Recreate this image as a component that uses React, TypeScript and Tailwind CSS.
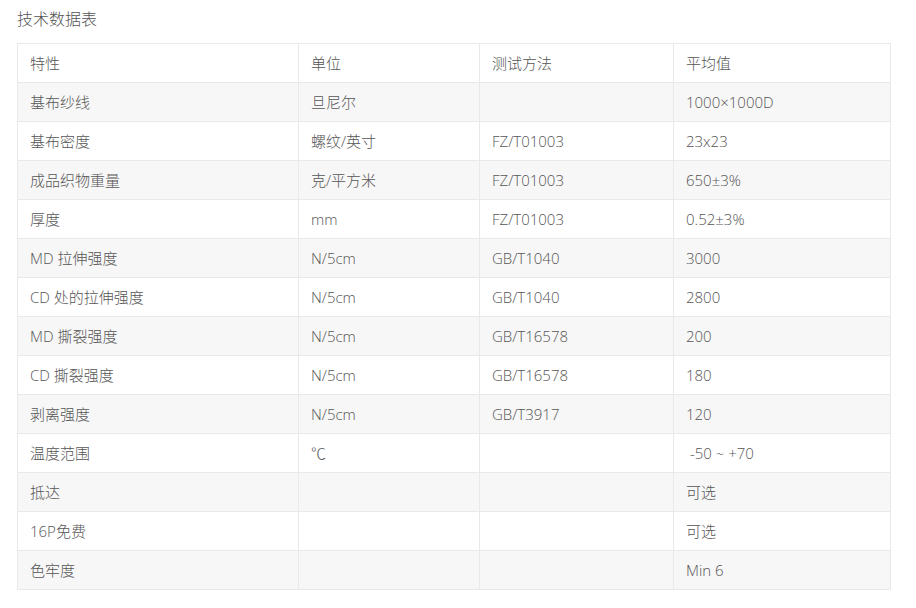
import React from 'react';

const rows: [string, string, string, string][] = [
  ['基布纱线', '旦尼尔', '', '1000×1000D'],
  ['基布密度', '螺纹/英寸', 'FZ/T01003', '23x23'],
  ['成品织物重量', '克/平方米', 'FZ/T01003', '650±3%'],
  ['厚度', 'mm', 'FZ/T01003', '0.52±3%'],
  ['MD 拉伸强度', 'N/5cm', 'GB/T1040', '3000'],
  ['CD 处的拉伸强度', 'N/5cm', 'GB/T1040', '2800'],
  ['MD 撕裂强度', 'N/5cm', 'GB/T16578', '200'],
  ['CD 撕裂强度', 'N/5cm', 'GB/T16578', '180'],
  ['剥离强度', 'N/5cm', 'GB/T3917', '120'],
  ['温度范围', '℃', '', '\u00a0-50 ~ +70'],
  ['抵达', '', '', '可选'],
  ['16P免费', '', '', '可选'],
  ['色牢度', '', '', 'Min 6'],
];

const cell = 'h-[39px] border border-[#e9e9e9] px-[12px] py-0 text-left align-middle font-light';

export default function App() {
  return (
    <div
      className="min-h-[608px] w-[916px] bg-white pl-[17px] pt-[8px] text-[15px] font-light text-[#555]"
      style={{ fontFamily: '"Open Sans", "Noto Sans CJK SC", sans-serif' }}
    >
      <h2 className="h-[22px] text-[16px] leading-[22px] font-light text-[#555]">技术数据表</h2>
      <table className="mt-[13px] w-[873px] table-fixed border-collapse">
        <colgroup>
          <col className="w-[281px]" />
          <col className="w-[181px]" />
          <col className="w-[194px]" />
          <col className="w-[217px]" />
        </colgroup>
        <thead>
          <tr className="bg-white">
            <th className={cell}>特性</th>
            <th className={cell}>单位</th>
            <th className={cell}>测试方法</th>
            <th className={cell}>平均值</th>
          </tr>
        </thead>
        <tbody>
          {rows.map((r, i) => (
            <tr key={i} className={i % 2 === 0 ? 'bg-[#f7f7f7]' : 'bg-white'}>
              {r.map((c, j) => (
                <td key={j} className={cell}>
                  {c}
                </td>
              ))}
            </tr>
          ))}
        </tbody>
      </table>
    </div>
  );
}
